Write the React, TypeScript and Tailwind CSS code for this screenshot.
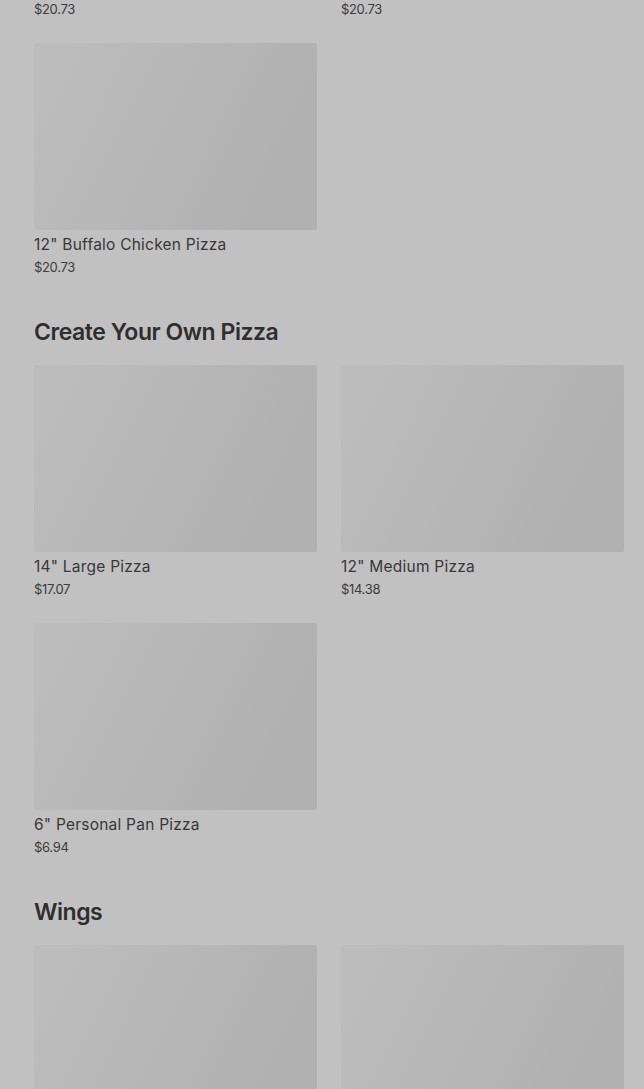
import React from "react";

type Item = { name?: string; price?: string };

const Thumb = () => (
  <div className="h-[187px] w-full rounded-[2px] bg-[linear-gradient(116deg,#bcbcbc_10%,#b6b6b6_50%,#b1b1b1_80%)]" />
);

const Card = ({ name, price }: Item) => (
  <div className="flex flex-col">
    <Thumb />
    {name && (
      <div className="mt-[5px] text-[15.5px] leading-[20px] tracking-[0.015em] text-[#383838]">{name}</div>
    )}
    {price && <div className="mt-[3px] text-[13px] leading-[18px] tracking-tight text-[#3c3c3c]">{price}</div>}
  </div>
);

const Grid = ({ items }: { items: Item[] }) => (
  <div className="grid grid-cols-[283px_283px] gap-x-6 gap-y-[25px]">
    {items.map((it, i) => (
      <Card key={i} {...it} />
    ))}
  </div>
);

const Section = ({ title, items }: { title: string; items: Item[] }) => (
  <section className="mt-10">
    <h2 className="mb-[17px] text-[23px] font-semibold leading-8 tracking-[-0.02em] text-[#2e2e2e]">{title}</h2>
    <Grid items={items} />
  </section>
);

export default function App() {
  return (
    <div className="h-[1089px] overflow-hidden bg-[#c1c1c1] font-['Inter',sans-serif]">
      <div className="pl-[34px]">
        {/* tail of the previous row, scrolled past */}
        <div className="grid grid-cols-[283px_283px] gap-x-6">
          <div className="text-[13px] leading-[18px] tracking-tight text-[#3c3c3c]">$20.73</div>
          <div className="text-[13px] leading-[18px] tracking-tight text-[#3c3c3c]">$20.73</div>
        </div>
        <div className="mt-[25px]">
          <Grid items={[{ name: "12\" Buffalo Chicken Pizza", price: "$20.73" }]} />
        </div>
        <Section
          title="Create Your Own Pizza"
          items={[
            { name: "14\" Large Pizza", price: "$17.07" },
            { name: "12\" Medium Pizza", price: "$14.38" },
            { name: "6\" Personal Pan Pizza", price: "$6.94" },
          ]}
        />
        <Section title="Wings" items={[{}, {}]} />
      </div>
    </div>
  );
}
